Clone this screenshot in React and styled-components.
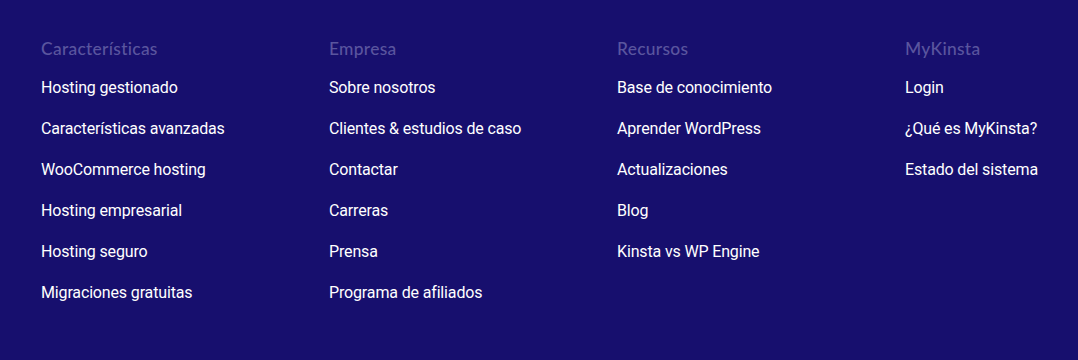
import React from "react";
import styled, { createGlobalStyle } from "styled-components";

const Global = createGlobalStyle`
  html, body { margin: 0; padding: 0; background: #170f6e; }
  body { font-family: Roboto, "Noto Sans", sans-serif; }
`;

const Footer = styled.footer`
  width: 1078px;
  height: 360px;
  box-sizing: border-box;
  background: #170f6e;
  padding: 38px 0 0 41px;
  display: grid;
  grid-template-columns: repeat(3, 288px) 1fr;
`;

const Column = styled.div`
  display: flex;
  flex-direction: column;
`;

const Heading = styled.h4`
  margin: 0 0 19px;
  font-family: Lato, "Open Sans", sans-serif;
  font-weight: 500;
  font-size: 17.4px;
  line-height: 21px;
  color: #5a559e;
  letter-spacing: 0.3px;
`;

const List = styled.ul`
  list-style: none;
  margin: 0;
  padding: 0;
  display: flex;
  flex-direction: column;
  gap: 21px;
`;

const Link = styled.a`
  display: block;
  font-family: Roboto, sans-serif;
  font-size: 16px;
  line-height: 20px;
  color: #ffffff;
  text-decoration: none;
  letter-spacing: -0.15px;
`;

const columns = [
  {
    title: "Características",
    links: [
      "Hosting gestionado",
      "Características avanzadas",
      "WooCommerce hosting",
      "Hosting empresarial",
      "Hosting seguro",
      "Migraciones gratuitas",
    ],
  },
  {
    title: "Empresa",
    links: [
      "Sobre nosotros",
      "Clientes & estudios de caso",
      "Contactar",
      "Carreras",
      "Prensa",
      "Programa de afiliados",
    ],
  },
  {
    title: "Recursos",
    links: [
      "Base de conocimiento",
      "Aprender WordPress",
      "Actualizaciones",
      "Blog",
      "Kinsta vs WP Engine",
    ],
  },
  {
    title: "MyKinsta",
    links: ["Login", "¿Qué es MyKinsta?", "Estado del sistema"],
  },
];

export default function App() {
  return (
    <>
      <Global />
      <Footer>
        {columns.map((c) => (
          <Column key={c.title}>
            <Heading>{c.title}</Heading>
            <List>
              {c.links.map((l) => (
                <li key={l}>
                  <Link href="#">{l}</Link>
                </li>
              ))}
            </List>
          </Column>
        ))}
      </Footer>
    </>
  );
}
